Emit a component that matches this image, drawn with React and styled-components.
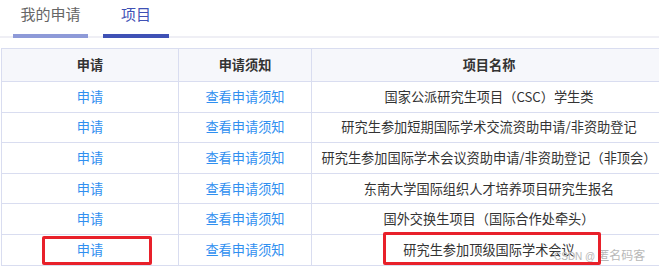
import styled, { createGlobalStyle } from "styled-components";

const GlobalStyle = createGlobalStyle`
  html, body {
    margin: 0;
    padding: 0;
    background: #fff;
    overflow: hidden;
  }
  body {
    font-family: "Noto Sans CJK SC", "Noto Sans", sans-serif;
  }
`;

const Page = styled.div`
  position: relative;
  width: 659px;
  height: 269px;
  overflow: hidden;
`;

const TabBar = styled.div`
  display: flex;
  height: 38px;
  box-shadow: inset 0 -2px 0 #efeff5;
`;

const Tab = styled.div`
  box-sizing: border-box;
  width: ${(p) => p.$width}px;
  margin-left: ${(p) => p.$offset}px;
  height: 38px;
  padding-top: 4px;
  line-height: 20px;
  font-size: 15px;
  text-align: center;
  color: ${(p) => (p.$active ? "#3f51b5" : "#666")};
  border-bottom: 4px solid ${(p) => (p.$active ? "#3f51b5" : "#8e9ad8")};
`;

const Table = styled.table`
  margin: 10px 0 0 1px;
  width: 658px;
  border-collapse: collapse;
  table-layout: fixed;
  font-size: 13.2px;
  line-height: 18px;
`;

const HeadCell = styled.th`
  height: 32px;
  padding: 0;
  background: #f6f7fb;
  border: 1px solid #d9ddf0;
  border-right: ${(p) => (p.$last ? "none" : "1px solid #d9ddf0")};
  color: #333;
  font-weight: 700;
  text-align: center;
`;

const Cell = styled.td`
  height: 29.6px;
  padding: 0;
  border: 1px solid #d9ddf0;
  border-right: ${(p) => (p.$last ? "none" : "1px solid #d9ddf0")};
  text-align: center;
  white-space: nowrap;
  overflow: visible;
  color: ${(p) => (p.$link ? "#2f8ff0" : "#333")};
`;

const Shifted = styled.span`
  padding-left: 7px;
`;

const Mark = styled.div`
  position: absolute;
  box-sizing: border-box;
  border: 3px solid #e8202a;
  border-radius: 2px;
`;

const Watermark = styled.div`
  position: absolute;
  left: 554px;
  top: 248px;
  line-height: 14px;
  color: #b8b8b8;
  text-shadow: 0 0 1px #fff;
  white-space: nowrap;
  font-size: 12px;
`;

const WatermarkLatin = styled.span`
  font-family: "Liberation Sans", sans-serif;
  font-size: 10px;
  margin-right: 2px;
`;

const rows = [
  "国家公派研究生项目（CSC）学生类",
  "研究生参加短期国际学术交流资助申请/非资助登记",
  "研究生参加国际学术会议资助申请/非资助登记（非顶会）",
  "东南大学国际组织人才培养项目研究生报名",
  "国外交换生项目（国际合作处牵头）",
  "研究生参加顶级国际学术会议",
];

export default function App() {
  return (
    <Page>
      <GlobalStyle />
      <TabBar>
        <Tab $offset={13} $width={75}>我的申请</Tab>
        <Tab $offset={15} $width={66} $active>项目</Tab>
      </TabBar>
      <Table>
        <colgroup>
          <col style={{ width: 177 }} />
          <col style={{ width: 133 }} />
          <col />
        </colgroup>
        <thead>
          <tr>
            <HeadCell>申请</HeadCell>
            <HeadCell>申请须知</HeadCell>
            <HeadCell $last>
              <Shifted>项目名称</Shifted>
            </HeadCell>
          </tr>
        </thead>
        <tbody>
          {rows.map((name) => (
            <tr key={name}>
              <Cell $link>申请</Cell>
              <Cell $link>查看申请须知</Cell>
              <Cell $last>
                <Shifted>{name}</Shifted>
              </Cell>
            </tr>
          ))}
        </tbody>
      </Table>
      <Watermark>
        <WatermarkLatin>CSDN @</WatermarkLatin>匿名码客
      </Watermark>
      <Mark style={{ left: 42, top: 236, width: 110, height: 29 }} />
      <Mark style={{ left: 383, top: 232, width: 218, height: 33 }} />
    </Page>
  );
}
